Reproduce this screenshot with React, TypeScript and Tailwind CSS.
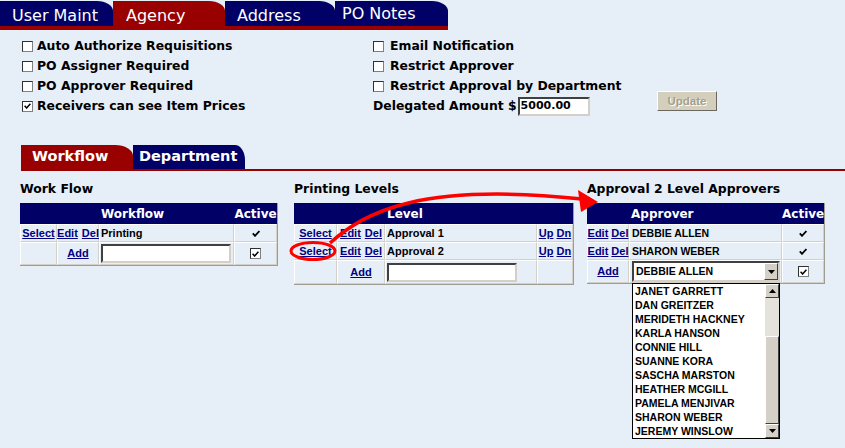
import React from "react";

const cell =
  "flex items-center border border-t-white border-l-white border-r-[#d4d0c8] border-b-[#d4d0c8]";

const Tick = () => (
  <svg width="8" height="7" viewBox="0 0 8 7">
    <path d="M0.8 3.4 L3 5.8 L7.4 1" stroke="#000" strokeWidth="1.8" fill="none" />
  </svg>
);

const Box = ({ checked = false }: { checked?: boolean }) => (
  <span className="flex items-center justify-center w-[11px] h-[11px] shrink-0 bg-white border border-t-[#303030] border-l-[#303030] border-r-[#808080] border-b-[#808080]">
    {checked && (
      <svg width="7" height="6" viewBox="0 0 7 6">
        <path d="M0.6 2.8 L2.6 5 L6.4 0.8" stroke="#000" strokeWidth="1.5" fill="none" />
      </svg>
    )}
  </span>
);

const Lnk = ({ children }: { children: React.ReactNode }) => (
  <a className="text-[#000080] underline font-bold cursor-pointer">{children}</a>
);

const Arrow = ({ up = false }: { up?: boolean }) => (
  <svg width="7" height="4" viewBox="0 0 7 4">
    <path d={up ? "M0 4 L3.5 0 L7 4 Z" : "M0 0 L7 0 L3.5 4 Z"} fill="#000" />
  </svg>
);

const Btn3d =
  "flex items-center justify-center bg-[#d4d0c8] border border-t-white border-l-white border-r-[#404040] border-b-[#404040]";

const TextBox = ({ className, children }: { className: string; children?: React.ReactNode }) => (
  <div
    className={
      "bg-white border-2 border-t-[#404040] border-l-[#404040] border-r-[#d4d0c8] border-b-[#d4d0c8] flex items-center " +
      className
    }
  >
    {children}
  </div>
);

const leftOpts: [string, boolean][] = [
  ["Auto Authorize Requisitions", false],
  ["PO Assigner Required", false],
  ["PO Approver Required", false],
  ["Receivers can see Item Prices", true],
];

const rightOpts = ["Email Notification", "Restrict Approver", "Restrict Approval by Department"];

const approvers = [
  "JANET GARRETT",
  "DAN GREITZER",
  "MERIDETH HACKNEY",
  "KARLA HANSON",
  "CONNIE HILL",
  "SUANNE KORA",
  "SASCHA MARSTON",
  "HEATHER MCGILL",
  "PAMELA MENJIVAR",
  "SHARON WEBER",
  "JEREMY WINSLOW",
];

const WorkFlowTable = () => (
  <div className="w-[258px] border-r border-b border-r-[#a09c90] border-b-[#a09c90]">
    <div className="flex items-center h-[21px] bg-[#000066] text-white text-[12px] font-bold leading-[14px]">
      <div className="w-[79px]" />
      <div className="w-[135px] pl-[2px]">Workflow</div>
      <div className="w-[43px] text-center">Active</div>
    </div>
    <div className="font-['Liberation_Sans',Arial,sans-serif] text-[11px] font-bold leading-[13px]">
      <div className="flex h-[18px]">
        <div className={cell + " w-[37px] justify-center"}>
          <Lnk>Select</Lnk>
        </div>
        <div className={cell + " w-[42px] justify-center gap-[4px]"}>
          <Lnk>Edit</Lnk>
          <Lnk>Del</Lnk>
        </div>
        <div className={cell + " w-[135px] pl-[1px]"}>Printing</div>
        <div className={cell + " w-[43px] justify-center"}>
          <Tick />
        </div>
      </div>
      <div className="flex h-[23px]">
        <div className={cell + " w-[37px]"} />
        <div className={cell + " w-[42px] justify-center"}>
          <Lnk>Add</Lnk>
        </div>
        <div className={cell + " w-[135px] pl-[1px]"}>
          <TextBox className="w-[130px] h-[19px]" />
        </div>
        <div className={cell + " w-[43px] justify-center"}>
          <Box checked />
        </div>
      </div>
    </div>
  </div>
);

const LevelsTable = () => (
  <div className="w-[280px] border-r border-b border-r-[#a09c90] border-b-[#a09c90]">
    <div className="flex items-center h-[21px] bg-[#000066] text-white text-[12px] font-bold leading-[14px]">
      <div className="w-[91px]" />
      <div className="w-[152px] pl-[2px]">Level</div>
      <div className="w-[36px]" />
    </div>
    <div className="font-['Liberation_Sans',Arial,sans-serif] text-[11px] font-bold leading-[13px]">
      {["Approval 1", "Approval 2"].map((name) => (
        <div key={name} className="flex h-[18px]">
          <div className={cell + " w-[43px] justify-center"}>
            <Lnk>Select</Lnk>
          </div>
          <div className={cell + " w-[48px] justify-center gap-[4px]"}>
            <Lnk>Edit</Lnk>
            <Lnk>Del</Lnk>
          </div>
          <div className={cell + " w-[152px] pl-[1px]"}>{name}</div>
          <div className={cell + " w-[36px] justify-center gap-[3px]"}>
            <Lnk>Up</Lnk>
            <Lnk>Dn</Lnk>
          </div>
        </div>
      ))}
      <div className="flex h-[24px]">
        <div className={cell + " w-[43px]"} />
        <div className={cell + " w-[48px] justify-center"}>
          <Lnk>Add</Lnk>
        </div>
        <div className={cell + " w-[152px] pl-[1px]"}>
          <TextBox className="w-[130px] h-[19px]" />
        </div>
        <div className={cell + " w-[36px]"} />
      </div>
    </div>
  </div>
);

const ApproverTable = () => (
  <div className="w-[238px] border-r border-b border-r-[#a09c90] border-b-[#a09c90]">
    <div className="flex items-center h-[21px] bg-[#000066] text-white text-[12px] font-bold leading-[14px]">
      <div className="w-[42px]" />
      <div className="w-[153px] pl-[2px]">Approver</div>
      <div className="w-[42px] text-center">Active</div>
    </div>
    <div className="font-['Liberation_Sans',Arial,sans-serif] text-[11px] font-bold leading-[13px]">
      {["DEBBIE ALLEN", "SHARON WEBER"].map((name) => (
        <div key={name} className="flex h-[18px]">
          <div className={cell + " w-[42px] justify-center gap-[3px]"}>
            <Lnk>Edit</Lnk>
            <Lnk>Del</Lnk>
          </div>
          <div className={cell + " w-[153px] pl-[2px] text-[10.5px]"}>{name}</div>
          <div className={cell + " w-[42px] justify-center"}>
            <Tick />
          </div>
        </div>
      ))}
      <div className="flex h-[23px]">
        <div className={cell + " w-[42px] justify-center"}>
          <Lnk>Add</Lnk>
        </div>
        <div className={cell + " w-[153px] !items-start pl-[2px]"}>
          <TextBox className="w-[148px] h-[21px] justify-between pl-[2px] text-[10.5px]">
            <span>DEBBIE ALLEN</span>
            <span className={Btn3d + " w-[14px] h-[17px]"}>
              <Arrow />
            </span>
          </TextBox>
        </div>
        <div className={cell + " w-[42px] justify-center"}>
          <Box checked />
        </div>
      </div>
    </div>
  </div>
);

const DropList = () => (
  <div className="absolute left-[632px] top-[283px] w-[148px] h-[156px] bg-white border border-black flex font-['Liberation_Sans',Arial,sans-serif] text-[10.5px] font-bold leading-[14px]">
    <div className="flex-1 pl-[2px]">
      {approvers.map((a) => (
        <div key={a} className="h-[14px]">
          {a}
        </div>
      ))}
    </div>
    <div className="w-[14px] flex flex-col">
      <div className={Btn3d + " h-[14px]"}>
        <Arrow up />
      </div>
      <div className="h-[38px] bg-[#e4e2da]" />
      <div className={Btn3d + " h-[88px]"} />
      <div className={Btn3d + " h-[14px]"}>
        <Arrow />
      </div>
    </div>
  </div>
);

export default function App() {
  return (
    <div className="relative w-[845px] h-[448px] overflow-hidden bg-[#e6eef8] text-black font-['DejaVu_Sans',Verdana,sans-serif]">
      {/* main tabs */}
      <div className="flex h-[26px] pt-[1px] text-white text-[16px] leading-[19px]">
        <div className="w-[113px] h-[25px] bg-[#000066] rounded-tr-[16px_10px] pl-[12px] pt-[5px]">User Maint</div>
        <div className="w-[112px] h-[25px] bg-[#990000] rounded-tr-[16px_10px] pl-[13px] pt-[5px]">Agency</div>
        <div className="w-[110px] h-[25px] bg-[#000066] rounded-tr-[16px_10px] pl-[12px] pt-[5px]">Address</div>
        <div className="w-[113px] h-[25px] bg-[#000066] rounded-tr-[16px_10px] pl-[7px] pt-[3px]">PO Notes</div>
      </div>
      <div className="w-[448px] h-[4px] bg-[#990000]" />

      {/* options */}
      <div className="flex pt-[6px] text-[12.4px] font-bold leading-[14px]">
        <div className="w-[373px] pl-[22px]">
          {leftOpts.map(([label, c]) => (
            <div key={label} className="flex items-center h-[20px] gap-[4px]">
              <Box checked={c} />
              <span>{label}</span>
            </div>
          ))}
        </div>
        <div className="w-[284px]">
          {rightOpts.map((label) => (
            <div key={label} className="flex items-center h-[20px] gap-[6px]">
              <Box />
              <span>{label}</span>
            </div>
          ))}
          <div className="flex items-center h-[20px]">
            <span>Delegated Amount $</span>
            <TextBox className="ml-[1px] w-[72px] h-[19px] pl-[1px] text-[11px]">5000.00</TextBox>
          </div>
        </div>
        <div className="pt-[55px]">
          <div className="w-[60px] h-[20px] flex items-center justify-center bg-[#d4cfbc] border border-t-white border-l-white border-r-[#6a6860] border-b-[#6a6860] font-['Liberation_Sans',Arial,sans-serif] text-[11.5px] text-[#a39f8b] [text-shadow:1px_1px_0_#ffffff]">
            Update
          </div>
        </div>
      </div>

      {/* sub tabs */}
      <div className="flex ml-[21px] mt-[29px] h-[24px] text-white text-[14.5px] font-bold leading-[17px]">
        <div className="w-[112px] bg-[#990000] rounded-tr-[18px_11px] pl-[11px] pt-[3px]">Workflow</div>
        <div className="w-[112px] bg-[#000066] rounded-tr-[10px_15px] pl-[6px] pt-[3px]">Department</div>
      </div>
      <div className="ml-[21px] h-[2px] bg-[#990000]" />

      {/* tables */}
      <div className="flex pt-[11px] pl-[20px] text-[12.4px] font-bold leading-[14px]">
        <div className="w-[258px]">
          <div className="h-[14px] mb-[7px]">Work Flow</div>
          <WorkFlowTable />
        </div>
        <div className="w-[280px] ml-[16px]">
          <div className="h-[14px] mb-[7px]">Printing Levels</div>
          <LevelsTable />
        </div>
        <div className="w-[238px] ml-[13px]">
          <div className="h-[14px] mb-[7px]">Approval 2 Level Approvers</div>
          <ApproverTable />
        </div>
      </div>

      <DropList />

      {/* annotation */}
      <svg className="absolute left-0 top-0 pointer-events-none" width="845" height="448">
        <ellipse cx="313" cy="251" rx="22" ry="8.5" stroke="#ff0000" strokeWidth="3" fill="none" />
        <path d="M330 243 C365 212 420 182 582 199" stroke="#ff0000" strokeWidth="3.5" fill="none" />
        <polygon points="578,190 581,212 598,202" fill="#ff0000" />
      </svg>
    </div>
  );
}
